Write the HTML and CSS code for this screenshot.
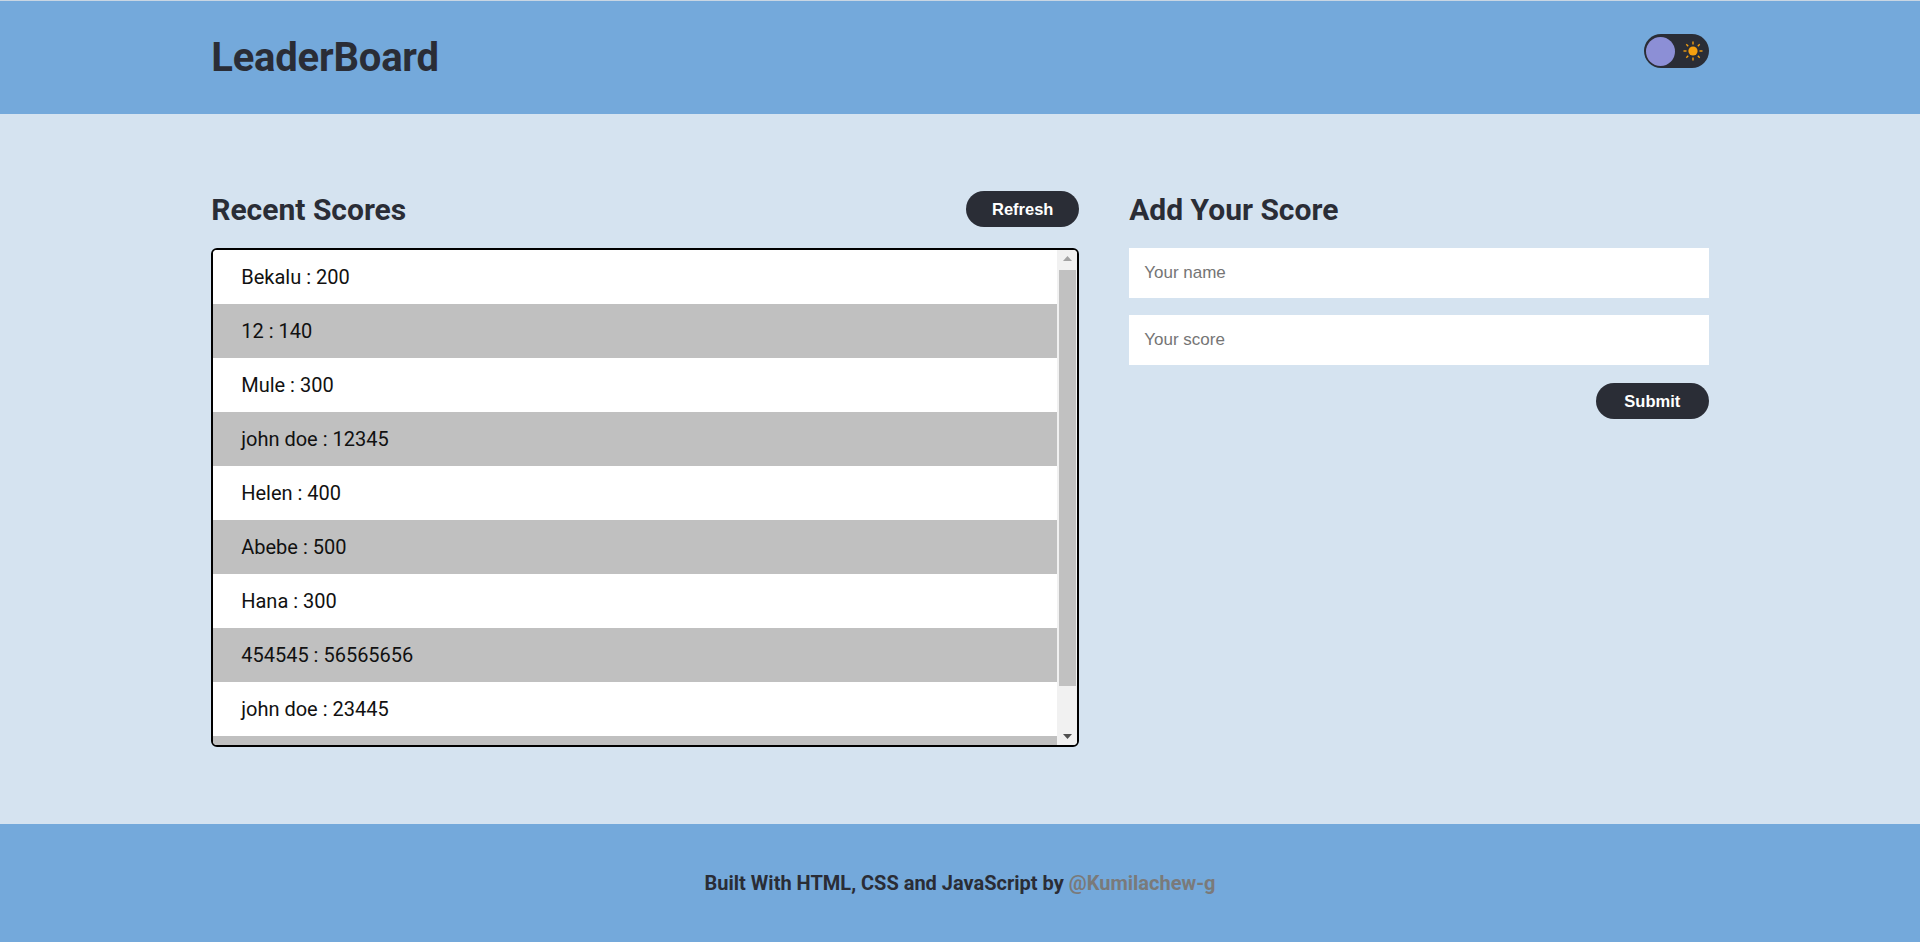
FILE: index.html
```html
<!DOCTYPE html>
<html lang="en">
<head>
<meta charset="UTF-8">
<title>LeaderBoard</title>
<link rel="stylesheet" href="styles.css">
</head>
<body>
<header class="header">
  <div class="container header-inner">
    <h1 class="logo">LeaderBoard</h1>
    <div class="toggle">
      <span class="knob"></span>
      <svg class="sun" width="20" height="20" viewBox="0 0 20 20">
        <circle cx="10" cy="10" r="4.6" fill="#f5a00f"/>
        <g stroke="#f5a00f" stroke-width="1.4" stroke-linecap="butt">
          <line x1="10" y1="0.5" x2="10" y2="3.5"/>
          <line x1="10" y1="16.5" x2="10" y2="19.5"/>
          <line x1="0.5" y1="10" x2="3.5" y2="10"/>
          <line x1="16.5" y1="10" x2="19.5" y2="10"/>
          <line x1="3.3" y1="3.3" x2="5.2" y2="5.2"/>
          <line x1="14.8" y1="14.8" x2="16.7" y2="16.7"/>
          <line x1="16.7" y1="3.3" x2="14.8" y2="5.2"/>
          <line x1="5.2" y1="14.8" x2="3.3" y2="16.7"/>
        </g>
      </svg>
    </div>
  </div>
</header>
<main class="main">
  <div class="container columns">
    <section class="scores">
      <div class="section-head">
        <h2 class="section-title">Recent Scores</h2>
        <button class="btn btn-refresh" type="button">Refresh</button>
      </div>
      <div class="score-box">
        <ul class="score-list">
          <li class="score">Bekalu : 200</li>
          <li class="score">12 : 140</li>
          <li class="score">Mule : 300</li>
          <li class="score">john doe : 12345</li>
          <li class="score">Helen : 400</li>
          <li class="score">Abebe : 500</li>
          <li class="score">Hana : 300</li>
          <li class="score">454545 : 56565656</li>
          <li class="score">john doe : 23445</li>
          <li class="score" aria-hidden="true"></li>
        </ul>
        <div class="scrollbar">
          <div class="sb-btn">
            <svg width="9" height="5" viewBox="0 0 9 5"><polygon points="0,5 9,5 4.5,0" fill="#a3a3a3"/></svg>
          </div>
          <div class="sb-track"><div class="sb-thumb"></div></div>
          <div class="sb-btn">
            <svg width="9" height="5" viewBox="0 0 9 5"><polygon points="0,0 9,0 4.5,5" fill="#505050"/></svg>
          </div>
        </div>
      </div>
    </section>
    <section class="add">
      <div class="section-head">
        <h2 class="section-title">Add Your Score</h2>
      </div>
      <form class="form">
        <input class="field" type="text" placeholder="Your name">
        <input class="field" type="text" placeholder="Your score">
        <div class="form-actions">
          <button class="btn btn-submit" type="button">Submit</button>
        </div>
      </form>
    </section>
  </div>
</main>
<footer class="footer">
  <p class="credit">Built With HTML, CSS and JavaScript by <a class="credit-link" href="#">@Kumilachew-g</a></p>
</footer>
</body>
</html>
```
FILE: styles.css
```css
* { box-sizing: border-box; }
html, body { margin: 0; padding: 0; }
body {
  font-family: Roboto, "Liberation Sans", Arial, sans-serif;
  background: #d5e3f0;
  color: #2a2d36;
  min-height: 942px;
  display: flex;
  flex-direction: column;
}
.container {
  width: 78%;
  margin: 0 auto;
}
.header {
  background: #74a9db;
  border-top: 1px solid #c9d6e3;
  height: 114px;
}
.header-inner {
  display: flex;
  justify-content: space-between;
  align-items: flex-start;
  height: 100%;
}
.logo {
  margin: 0;
  font-size: 40px;
  font-weight: 700;
  line-height: 1;
  margin-top: 37px;
  color: #2a2d36;
  letter-spacing: -0.2px;
}
.toggle {
  margin-top: 33px;
  width: 65px;
  height: 34px;
  background: #2a2d36;
  border-radius: 17px;
  display: flex;
  align-items: center;
  justify-content: space-between;
  padding: 0 3px 0 2px;
}
.knob {
  width: 29px;
  height: 29px;
  border-radius: 50%;
  background: #8c8fd6;
}
.sun { display: block; margin-right: 3px; }
.main {
  flex: 1;
  padding: 77px 0;
}
.columns {
  display: grid;
  grid-template-columns: 868px 1fr;
  column-gap: 50px;
}
.section-head {
  display: flex;
  justify-content: space-between;
  align-items: center;
  height: 36px;
  margin-bottom: 21px;
}
.section-title {
  margin: 0;
  font-size: 30px;
  font-weight: 700;
  line-height: 1;
  color: #2a2d36;
  padding-top: 2px;
}
.btn {
  border: none;
  background: #2a2d36;
  color: #fff;
  font-family: "Liberation Sans", Arial, sans-serif;
  font-weight: 700;
  font-size: 16.5px;
  border-radius: 18px;
  height: 36px;
  cursor: pointer;
}
.btn-refresh { width: 113px; }
.btn-submit { width: 113px; }
.score-box {
  display: flex;
  height: 499px;
  border: 2px solid #000;
  border-radius: 6px;
  overflow: hidden;
  background: #fff;
}
.score-list {
  flex: 1;
  list-style: none;
  margin: 0;
  padding: 0;
  overflow: hidden;
}
.scrollbar {
  width: 20px;
  background: #f1f1f1;
  display: flex;
  flex-direction: column;
}
.sb-btn {
  height: 17px;
  display: flex;
  align-items: center;
  justify-content: center;
  padding-left: 1px;
}
.sb-track {
  flex: 1;
  padding: 3px 1px 0 2px;
}
.sb-thumb {
  height: 416px;
  background: #c1c1c1;
}
.score {
  height: 54px;
  display: flex;
  align-items: center;
  padding-left: 28px;
  font-size: 20px;
  color: #111;
  background: #fff;
}
.score:nth-child(even) { background: #c0c0c0; }
.form {
  display: flex;
  flex-direction: column;
  gap: 17px;
}
.field {
  height: 50px;
  border: none;
  background: #fff;
  padding: 0 15px;
  font-family: "Liberation Sans", Arial, sans-serif;
  font-size: 17px;
  color: #222;
  outline: none;
}
.field::placeholder { color: #757575; }
.form-actions {
  display: flex;
  justify-content: flex-end;
  margin-top: 1px;
}
.footer {
  background: #74a9db;
  height: 118px;
  display: flex;
  align-items: center;
  justify-content: center;
}
.credit {
  margin: 0;
  font-size: 20px;
  font-weight: 700;
  color: #2a2d36;
}
.credit-link {
  color: #7a7a7a;
  text-decoration: none;
}
```
